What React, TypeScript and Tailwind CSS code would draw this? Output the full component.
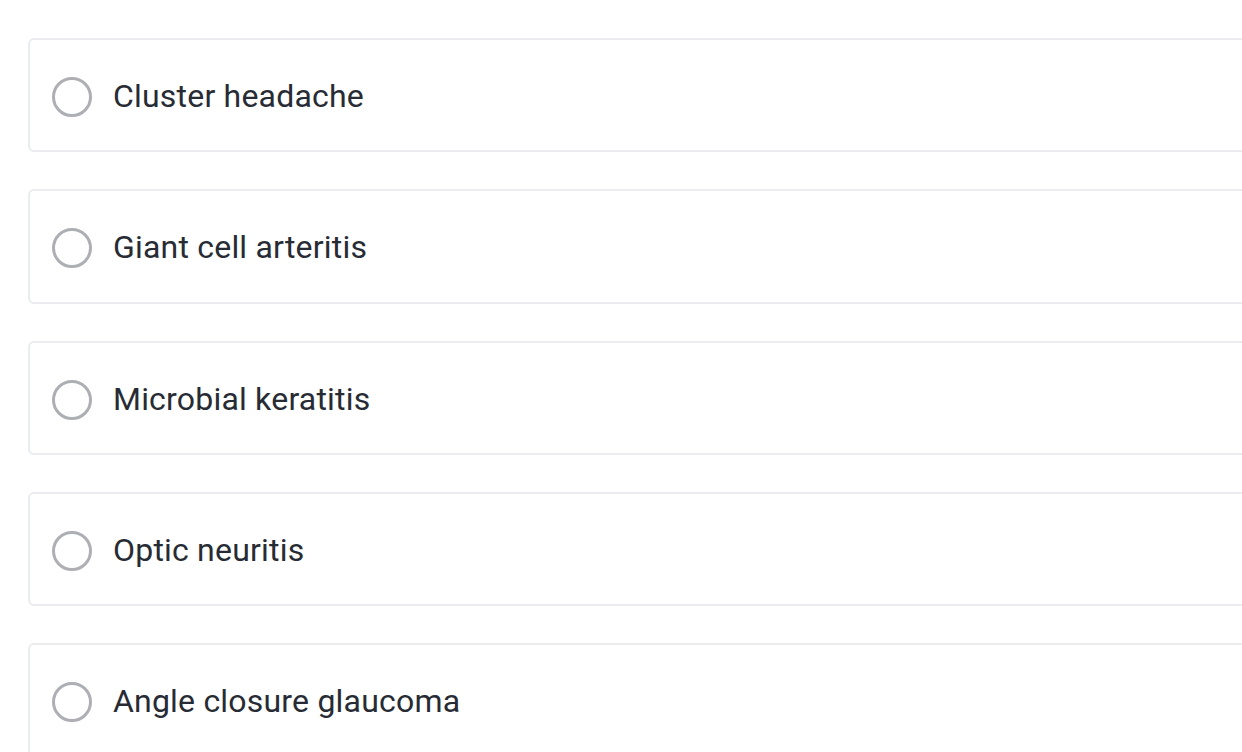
import React from "react";

const options = [
  "Cluster headache",
  "Giant cell arteritis",
  "Microbial keratitis",
  "Optic neuritis",
  "Angle closure glaucoma",
];

export default function App() {
  return (
    <div
      className="w-[1242px] h-[752px] overflow-hidden bg-white pl-[28px] pt-[38px]"
      style={{ fontFamily: "Roboto, 'Liberation Sans', sans-serif" }}
    >
      <div className="flex flex-col gap-[37px] w-[1260px]">
        {options.map((o) => (
          <div
            key={o}
            className="h-[114.25px] shrink-0 rounded-[6px] border-2 border-[#eaecef] bg-white flex items-center pl-[22px]"
          >
            <span className="w-[40px] h-[40px] rounded-full border-[3.5px] border-[#adafb4] shrink-0 mt-[4px]" />
            <span className="ml-[21px] text-[32px] leading-none text-[#272b34] mt-[2px] tracking-[0.2px]">
              {o}
            </span>
          </div>
        ))}
      </div>
    </div>
  );
}
